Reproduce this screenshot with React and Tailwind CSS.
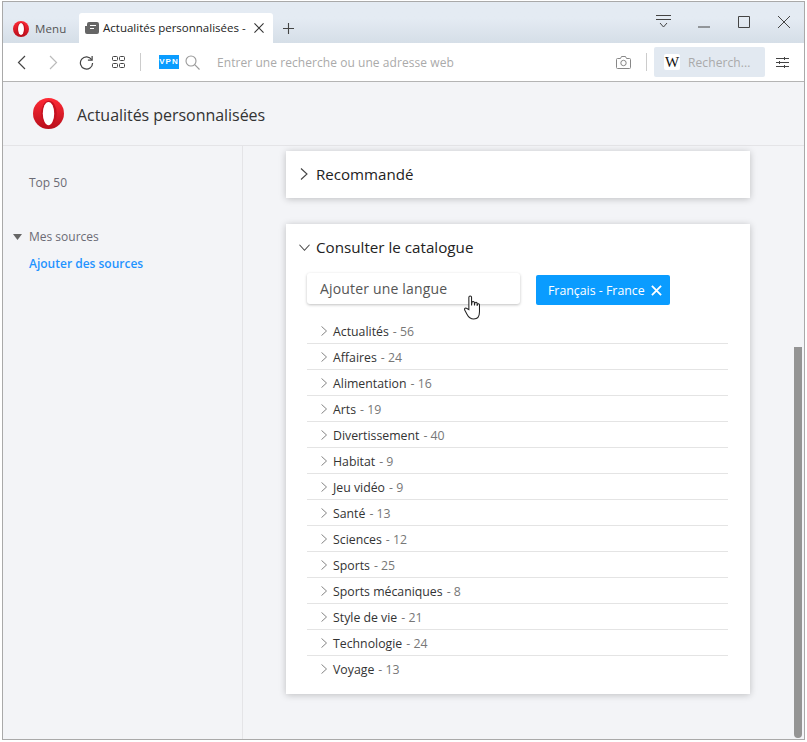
import React from 'react';

const categories = [
  ['Actualités', 56],
  ['Affaires', 24],
  ['Alimentation', 16],
  ['Arts', 19],
  ['Divertissement', 40],
  ['Habitat', 9],
  ['Jeu vidéo', 9],
  ['Santé', 13],
  ['Sciences', 12],
  ['Sports', 25],
  ['Sports mécaniques', 8],
  ['Style de vie', 21],
  ['Technologie', 24],
  ['Voyage', 13],
];

const OperaLogo = ({ size }) => (
  <svg width={size} height={size} viewBox="0 0 32 32" className="shrink-0">
    <defs>
      <linearGradient id={`op${size}`} x1="0" y1="0" x2="0" y2="1">
        <stop offset="0" stopColor="#ff2a35" />
        <stop offset="1" stopColor="#b80f1c" />
      </linearGradient>
    </defs>
    <circle cx="16" cy="16" r="16" fill={`url(#op${size})`} />
    <ellipse cx="16.500" cy="16" rx="8" ry="13.200" fill="#c5111f" />
    <ellipse cx="16" cy="16" rx="5.900" ry="12" fill="#fff" />
  </svg>
);

const Chevron = ({ dir = 'right', color = '#444', size = 12 }) => (
  <svg width={size} height={size} viewBox="0 0 12 12" fill="none" stroke={color} strokeWidth="1.100" className="shrink-0">
    {dir === 'right' ? <path d="M3 .5 9 6 3 11.500" /> : <path d="M.5 3 6 9 11.500 3" />}
  </svg>
);

const TabStrip = () => (
  <div className="flex h-[41px] shrink-0 bg-gradient-to-b from-[#e4ebf3] from-40% to-[#d5dee7]">
    <div className="flex items-center self-end h-[29px] pl-[10px] w-[76px] gap-[6px]">
      <OperaLogo size={16} />
      <span className="text-[11.500px] tracking-[0.100px] text-[#555]">Menu</span>
    </div>
    <div className="flex items-center self-end h-[30px] w-[194px] bg-white rounded-t-[3px] pl-[6px] pr-[6px]">
      <svg width="14" height="12" viewBox="0 0 14 12" className="shrink-0">
        <path d="M4 0h8a2 2 0 0 1 2 2v8a2 2 0 0 1-2 2H2a2 2 0 0 1-2-2V4h2V2a2 2 0 0 1 2-2z" fill="#666" />
        <path d="M5 3.500h6M5 6.500h4" stroke="#fff" strokeWidth="1.200" />
      </svg>
      <span className="ml-[4px] text-[11.500px] text-[#222] whitespace-nowrap">Actualités personnalisées -</span>
      <svg width="10" height="10" viewBox="0 0 11 11" stroke="#333" strokeWidth="1.200" className="ml-auto mr-[3px] shrink-0">
        <path d="M.5.5l10 10M10.500.5l-10 10" />
      </svg>
    </div>
    <svg width="11" height="11" viewBox="0 0 11 11" stroke="#444" strokeWidth="1.100" className="self-center mt-[12px] ml-[10px]">
      <path d="M5.500 0v11M0 5.500h11" />
    </svg>
    <div className="ml-auto flex items-start pt-[13px] pr-[14px]">
      <svg width="15" height="14" viewBox="0 0 15 14" fill="none" stroke="#444" strokeWidth="1">
        <path d="M0 .5h15M0 4.500h15M4 8l3.500 4L11 8" />
      </svg>
      <svg width="12" height="2" viewBox="0 0 12 2" stroke="#444" strokeWidth="1" className="ml-[27px] mt-[11px]">
        <path d="M0 1h12" />
      </svg>
      <svg width="12" height="12" viewBox="0 0 12 12" fill="none" stroke="#444" strokeWidth="1" className="ml-[28px] mt-[1px]">
        <path d="M.5.5h11v11H.5z" />
      </svg>
      <svg width="12" height="12" viewBox="0 0 12 12" stroke="#444" strokeWidth="1" className="ml-[28px] mt-[1px]">
        <path d="M0 0l12 12M12 0 0 12" />
      </svg>
    </div>
  </div>
);

const Toolbar = () => (
  <div className="flex items-center h-[39px] shrink-0 bg-white border-b border-[#b4b4b4]">
    <svg width="9" height="15" viewBox="0 0 9 15" fill="none" stroke="#444" strokeWidth="1.200" className="ml-[14px]">
      <path d="M8 1 1.500 7.500 8 14" />
    </svg>
    <svg width="9" height="15" viewBox="0 0 9 15" fill="none" stroke="#bbb" strokeWidth="1.200" className="ml-[23px]">
      <path d="M1 1l6.500 6.500L1 14" />
    </svg>
    <svg width="15" height="15" viewBox="0 0 16 16" fill="none" stroke="#444" strokeWidth="1.300" className="ml-[21px]">
      <path d="M13.500 5A6.500 6.500 0 1 0 14.500 8.500" />
      <path d="M14 1v4.500H9.500" />
    </svg>
    <svg width="13" height="13" viewBox="0 0 13 13" fill="none" stroke="#444" strokeWidth="1" className="ml-[18px]">
      <rect x=".5" y=".5" width="5" height="4" rx="1" />
      <rect x="7.500" y=".5" width="5" height="4" rx="1" />
      <rect x=".5" y="7.500" width="5" height="4" rx="1" />
      <rect x="7.500" y="7.500" width="5" height="4" rx="1" />
    </svg>
    <div className="ml-[15px] h-[18px] w-px bg-[#ccc]" />
    <div className="ml-[18px] flex items-center justify-center w-[20px] h-[14px] bg-[#0a9cff] text-[8px] font-bold tracking-[1px] text-white font-['Liberation_Sans',sans-serif]">VPN</div>
    <svg width="15" height="15" viewBox="0 0 15 15" fill="none" stroke="#999" strokeWidth="1.100" className="ml-[6px]">
      <circle cx="6" cy="6" r="5" />
      <path d="M9.700 9.700 14.500 14.500" />
    </svg>
    <span className="ml-[17px] pt-[2px] text-[12px] tracking-[0.060px] text-[#aaa]">Entrer une recherche ou une adresse web</span>
    <svg width="15" height="13" viewBox="0 0 15 13" fill="none" stroke="#888" strokeWidth="1" className="ml-auto">
      <path d="M1.500 2.500H4.500L5.500.5h4l1 2h3a1 1 0 0 1 1 1v8a1 1 0 0 1-1 1h-12a1 1 0 0 1-1-1v-8a1 1 0 0 1 1-1z" />
      <circle cx="7.500" cy="7" r="2.700" />
    </svg>
    <div className="ml-[15px] h-[18px] w-px bg-[#ccc]" />
    <div className="ml-[7px] flex items-center w-[111px] h-[30px] bg-[#e2e9f1] rounded-[2px] pl-[10px]">
      <div className="flex items-center justify-center w-[16px] h-[16px] bg-white rounded-[2px] font-['Liberation_Serif',serif] text-[15px] leading-none text-[#111]">W</div>
      <span className="ml-[8px] pt-[2px] text-[12px] tracking-[0.100px] text-[#aaa]">Recherch...</span>
    </div>
    <svg width="13" height="11" viewBox="0 0 13 11" fill="none" stroke="#444" strokeWidth="1" className="ml-[11px] mr-[15px]">
      <path d="M0 1.500h13M0 5.500h13M0 9.500h13M8.500 0v3M3.500 4v3M8.500 8v3" />
    </svg>
  </div>
);

const Sidebar = () => (
  <aside className="w-[240px] shrink-0 border-r border-[#e4e4e7] text-[12px]">
    <div className="pl-[26px] pt-[28px] leading-[18px] text-[#6b6b75]">Top 50</div>
    <div className="flex items-center mt-[36px] pl-[10px] leading-[18px] text-[#6b6b75]">
      <svg width="9" height="6" viewBox="0 0 9 6" fill="#666"><path d="M0 0h9L4.500 6z" /></svg>
      <span className="ml-[7px]">Mes sources</span>
    </div>
    <div className="pl-[26px] mt-[9px] leading-[18px] font-semibold text-[#1f93ff]">Ajouter des sources</div>
  </aside>
);

const CategoryRow = ({ name, count }) => (
  <div className="flex items-center h-[26px] border-b border-[#e4e4e4] last:border-transparent pl-[12px]">
    <Chevron color="#777" size={10} />
    <span className="ml-[4px] pt-[4px] text-[12.300px] text-[#333]">{name}</span>
    <span className="ml-[4px] pt-[4px] text-[12.300px] text-[#777]">- {count}</span>
  </div>
);

const Catalogue = () => (
  <div className="mt-[26px] w-[464px] h-[470px] bg-white shadow-[0_1px_7px_rgba(0,0,0,0.22)] pt-[13px]">
    <div className="flex items-center h-[20px] pl-[13px]">
      <Chevron dir="down" size={11} />
      <span className="ml-[6px] text-[15.200px] text-[#222]">Consulter le catalogue</span>
    </div>
    <div className="flex items-center ml-[21px] mt-[15px]">
      <div className="relative w-[213px] h-[31px] bg-white rounded-[3px] shadow-[0_1px_3px_rgba(0,0,0,0.25)] pl-[13px] text-[14px] tracking-[0.170px] leading-[31px] text-[#555]">
        Ajouter une langue
        {/* hand cursor */}
        <svg width="19" height="25" viewBox="0 0 17 24" className="absolute left-[156px] top-[22px]" fill="#fff" stroke="#222" strokeWidth="1">
          <path d="M5 14V2.200a1.300 1.300 0 0 1 2.600 0V10l.4-3a1.200 1.200 0 0 1 2.300.3l.1 2.700.3-2a1.100 1.100 0 0 1 2.200.3v2l.3-1a1 1 0 0 1 2 .3V16c0 4-1.700 7-5.500 7-3.500 0-5-1.500-6.500-4.500L1 14.500c-.7-1.500 1-2.700 2.200-1.500z" />
        </svg>
      </div>
      <div className="ml-[16px] mt-[3px] flex items-center h-[30px] w-[134px] bg-[#0a9cff] rounded-[2px] pl-[12px] text-[12.350px] text-white">
        <span className="pt-[2px]">Français - France</span>
        <svg width="11" height="11" viewBox="0 0 12 12" stroke="#fff" strokeWidth="2" className="ml-[6px] mt-[1px]">
          <path d="M1 1l10 10M11 1 1 11" />
        </svg>
      </div>
    </div>
    <div className="ml-[21px] mr-[22px] mt-[13px]">
      {categories.map(([name, count]) => (
        <CategoryRow key={name} name={name} count={count} />
      ))}
    </div>
  </div>
);

const App = () => (
  <div className="w-[807px] h-[742px] bg-white overflow-hidden pt-px pl-[2px] font-['Open_Sans',sans-serif]">
    <div className="flex flex-col w-[803px] h-[739px] border border-[#a9a9a9] bg-[#f3f4f7]">
      <TabStrip />
      <Toolbar />
      <div className="flex items-center h-[64px] shrink-0 border-b border-[#e4e4e7] pl-[30px]">
        <OperaLogo size={31} />
        <span className="ml-[13px] pt-[2px] text-[16px] tracking-[-0.040px] text-[#333]">Actualités personnalisées</span>
      </div>
      <div className="flex flex-1 min-h-0">
        <Sidebar />
        <main className="relative flex-1 pl-[43px] pt-[5px]">
          <div className="flex items-center w-[464px] h-[47px] bg-white shadow-[0_1px_7px_rgba(0,0,0,0.22)] pl-[12px] pb-[1px]">
            <Chevron size={12} />
            <span className="ml-[6px] text-[15.100px] text-[#222]">Recommandé</span>
          </div>
          <Catalogue />
          <div className="absolute right-[2px] top-[201px] bottom-[1px] w-[8px] bg-[#949494] rounded-b-[4px]" />
        </main>
      </div>
    </div>
  </div>
);

export default App;
